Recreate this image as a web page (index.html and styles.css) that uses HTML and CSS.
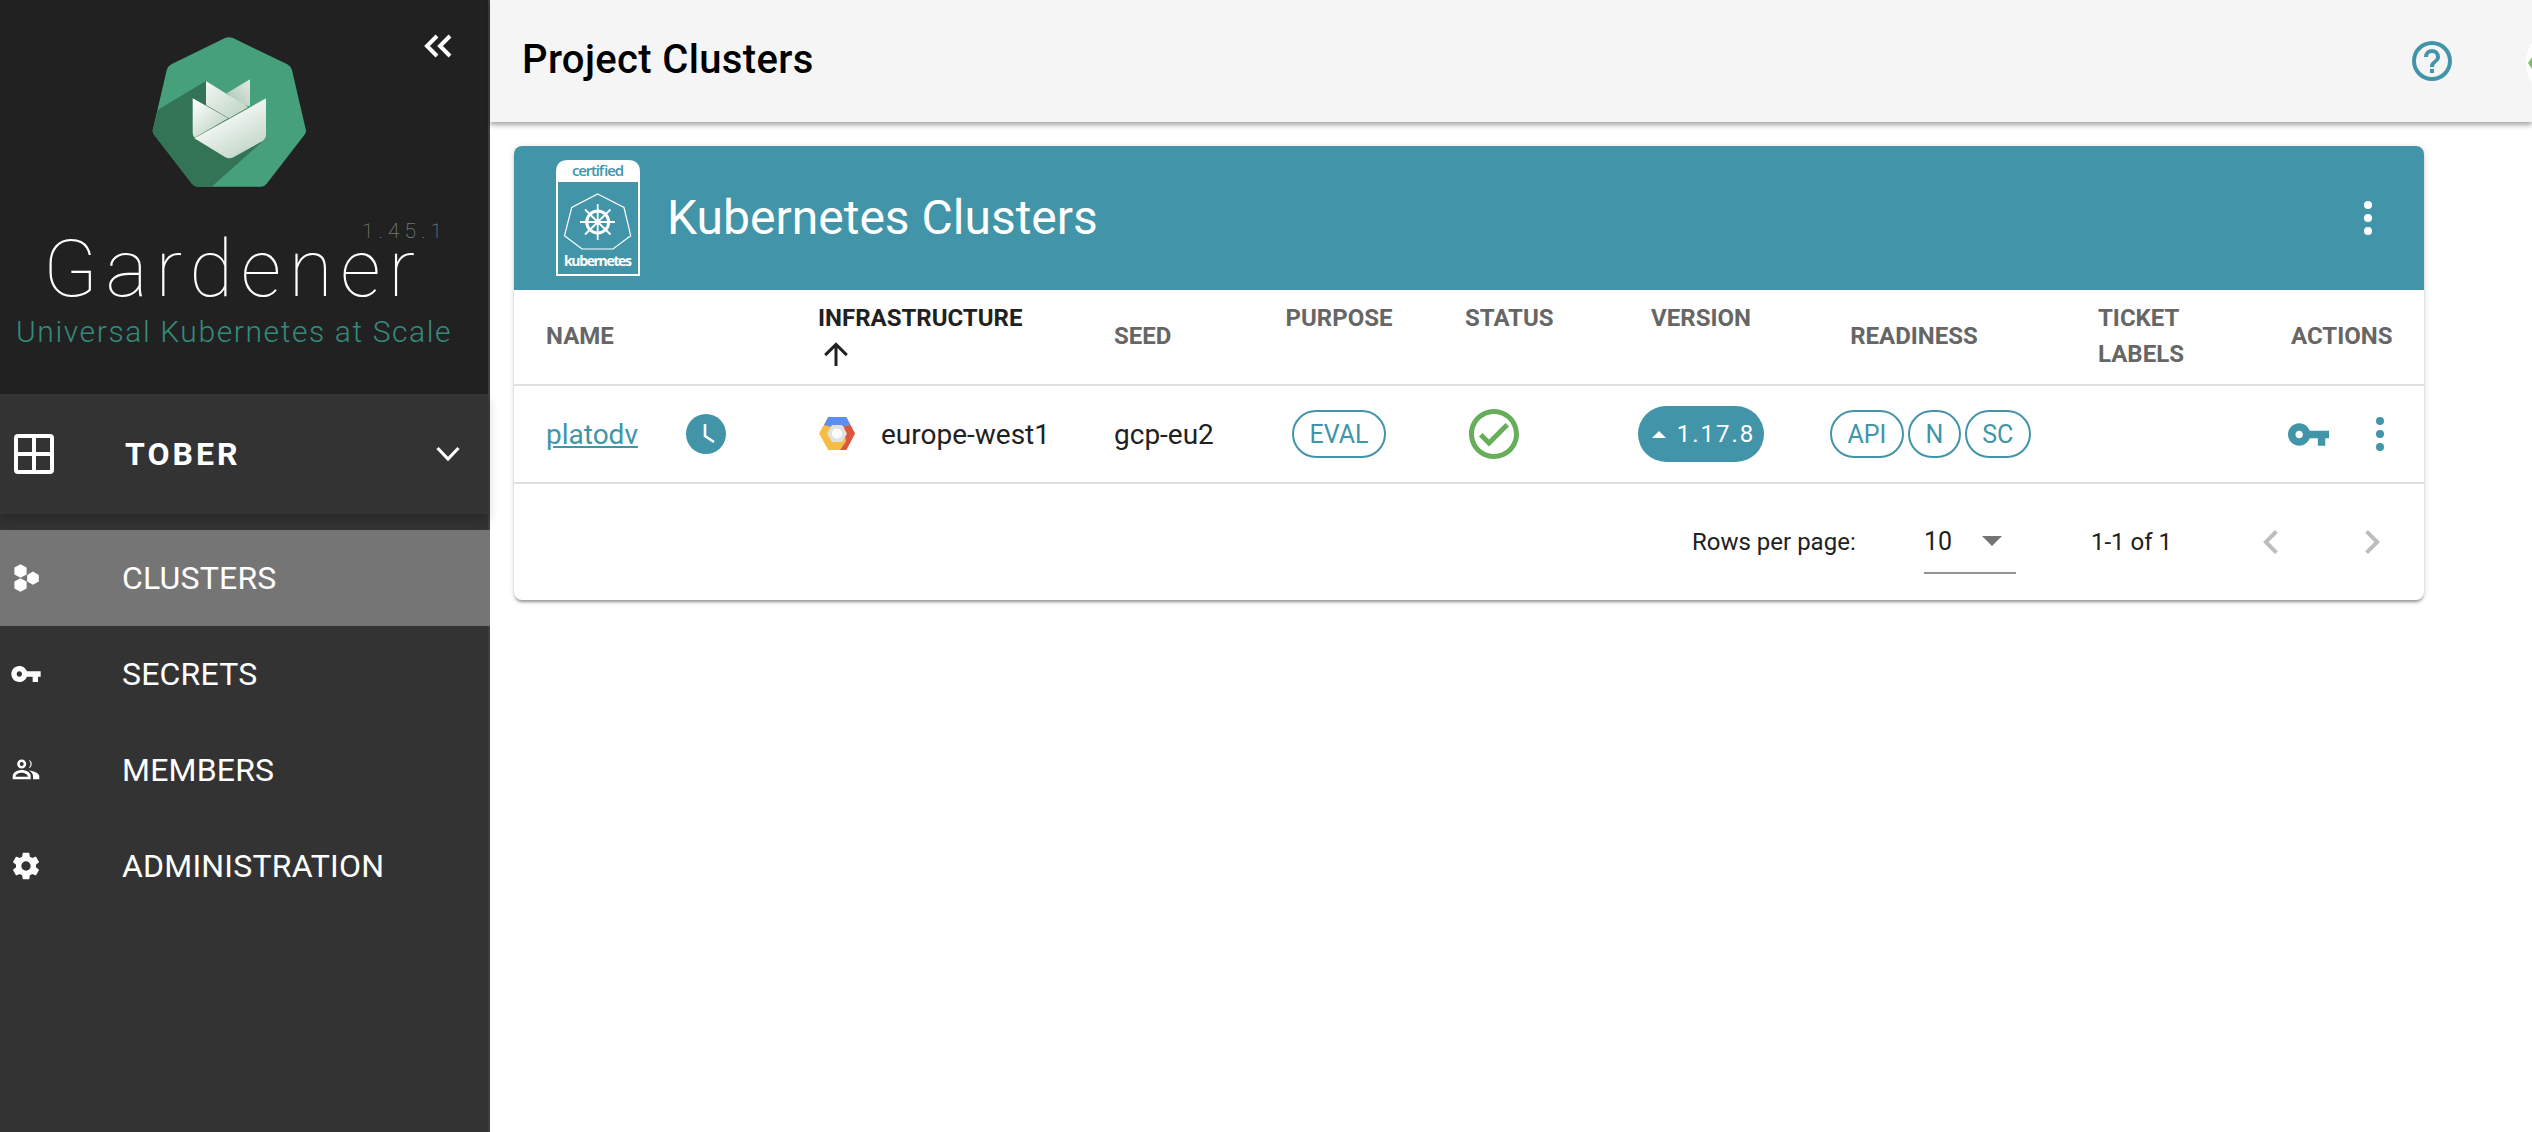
FILE: index.html
```html
<!DOCTYPE html>
<html lang="en">
<head>
<meta charset="utf-8">
<title>Project Clusters</title>
<link rel="stylesheet" href="styles.css">
</head>
<body>
<div class="app">
  <aside class="sidebar">
    <div class="brand">
      <svg class="collapse" viewBox="0 0 28 24"><path d="M13 2 3 12l10 10M26 2 16 12l10 10" fill="none" stroke="#fff" stroke-width="4"/></svg>
      <svg class="logo" viewBox="0 0 600 540">
        <defs>
          <linearGradient id="pf" x1="0.25" y1="0.2" x2="0.8" y2="1"><stop offset="0" stop-color="#fff"/><stop offset="1" stop-color="#bdd3c3"/></linearGradient>
          <linearGradient id="pl" x1="0.1" y1="0" x2="0.9" y2="1"><stop offset="0" stop-color="#fff"/><stop offset="1" stop-color="#b5cdbb"/></linearGradient>
          <linearGradient id="pc" x1="0" y1="0" x2="1" y2="1"><stop offset="0" stop-color="#f2f6f2"/><stop offset="1" stop-color="#bcd2c2"/></linearGradient>
          <linearGradient id="pr" x1="1" y1="0" x2="0" y2="1"><stop offset="0" stop-color="#e2ebe3"/><stop offset="1" stop-color="#a9c4b0"/></linearGradient>
        </defs>
        <path d="M285 54q12-5 24 0L472 133q11 6 14 18l41 176q3 10-4 18L410 491q-7 9-17 9H203q-10 0-17-9L73 345q-7-8-4-18l41-176q3-12 14-18Z" fill="#46a07c"/>
        <path d="M228 183 83 270l-14 57q-3 10 4 18L186 491q7 9 17 9h42L408 355 355 262Z" fill="#337356"/>
        <path d="M360 178v80l-30-2-40-36Z" fill="url(#pr)"/>
        <path d="M228 183 355 262l-58 33-69-40Z" fill="url(#pc)"/>
        <path d="M188 235 295 295l-101 58q-6-5-6-14Z" fill="url(#pl)"/>
        <path d="M193 355 408 235v108q0 14-10 20l-88 49q-12 6-24 0Z" fill="url(#pf)"/>
      </svg>
      <div class="wordmark">
        <span class="version">1.45.1</span>
        <div class="brand-name">Gardener</div>
      </div>
      <div class="tagline">Universal Kubernetes at Scale</div>
    </div>
    <div class="project">
      <svg class="project-grid" viewBox="0 0 40 40"><rect x="2" y="2" width="36" height="36" rx="2" fill="none" stroke="#fff" stroke-width="4"/><path d="M20 2v36M2 20h36" stroke="#fff" stroke-width="4"/></svg>
      <span class="project-name">TOBER</span>
      <svg class="project-caret" viewBox="0 0 24 16"><path d="M1.5 2 12 13 22.5 2" fill="none" stroke="#fff" stroke-width="3.2"/></svg>
    </div>
    <nav class="nav">
      <a class="nav-item active">
        <span class="nav-icon"><svg viewBox="0 0 32 32"><path fill="#fff" d="M10.5 2.2 16.6 5.6V12.4L10.5 15.8 4.4 12.4V5.6ZM10.5 16.2 16.6 19.6V26.4L10.5 29.8 4.4 26.4V19.6ZM23 9.6 28.8 13V19.4L23 22.8 17.2 19.4V13Z"/></svg></span>
        <span>CLUSTERS</span>
      </a>
      <a class="nav-item">
        <span class="nav-icon"><svg viewBox="0 0 24 24"><path fill="#fff" d="M12.65 10C11.83 7.67 9.61 6 7 6c-3.31 0-6 2.69-6 6s2.69 6 6 6c2.61 0 4.83-1.67 5.65-4H17v4h4v-4h2v-4H12.65zM7 14c-1.1 0-2-.9-2-2s.9-2 2-2 2 .9 2 2-.9 2-2 2z"/></svg></span>
        <span>SECRETS</span>
      </a>
      <a class="nav-item">
        <span class="nav-icon"><svg viewBox="0 0 32 32"><path fill="#fff" fill-rule="evenodd" d="M11.700 5.500a4.500 4.500 0 1 1 0 9 4.500 4.500 0 0 1 0-9ZM11.700 8a2 2 0 1 0 0 4 2 2 0 0 0 0-4ZM18.500 5.700a4.500 4.500 0 0 1 0 8.600c1.300-1.300 2-2.700 2-4.300s-.7-3-2-4.300ZM2.700 25.300V22C3 18 8 16 11.700 16c3.800 0 9 2 9 6v3.300ZM5.500 22.800H18C17.500 20 14 18.800 11.700 18.800 9 18.800 6 20 5.500 22.800ZM19 16.500C24 17 29.300 19 29.300 22.500V25.300H23V22C23 20 21.500 18 19 16.500Z"/></svg></span>
        <span>MEMBERS</span>
      </a>
      <a class="nav-item">
        <span class="nav-icon"><svg viewBox="0 0 24 24"><path fill="#fff" d="M12,15.5A3.5,3.5 0 0,1 8.5,12A3.5,3.5 0 0,1 12,8.5A3.5,3.5 0 0,1 15.5,12A3.5,3.5 0 0,1 12,15.5M19.43,12.97C19.47,12.65 19.5,12.33 19.5,12C19.5,11.67 19.47,11.34 19.43,11L21.54,9.37C21.73,9.22 21.78,8.95 21.66,8.73L19.66,5.27C19.54,5.05 19.27,4.96 19.05,5.05L16.56,6.05C16.04,5.66 15.5,5.32 14.87,5.07L14.5,2.42C14.46,2.18 14.25,2 14,2H10C9.75,2 9.54,2.18 9.5,2.42L9.13,5.07C8.5,5.32 7.96,5.66 7.44,6.05L4.95,5.05C4.73,4.96 4.46,5.05 4.34,5.27L2.34,8.73C2.21,8.95 2.27,9.22 2.46,9.37L4.57,11C4.53,11.34 4.5,11.67 4.5,12C4.5,12.33 4.53,12.65 4.57,12.97L2.46,14.63C2.27,14.78 2.21,15.05 2.34,15.27L4.34,18.73C4.46,18.95 4.73,19.03 4.95,18.95L7.44,17.94C7.96,18.34 8.5,18.68 9.13,18.93L9.5,21.58C9.54,21.82 9.75,22 10,22H14C14.25,22 14.46,21.82 14.5,21.58L14.87,18.93C15.5,18.67 16.04,18.34 16.56,17.94L19.05,18.95C19.27,19.03 19.54,18.95 19.66,18.73L21.66,15.27C21.78,15.05 21.73,14.78 21.54,14.63L19.43,12.97Z"/></svg></span>
        <span>ADMINISTRATION</span>
      </a>
    </nav>
  </aside>
  <main class="main">
    <header class="topbar">
      <h1 class="page-title">Project Clusters</h1>
      <svg class="help" viewBox="0 0 24 24"><path fill="#4295a8" d="M11,18H13V16H11V18M12,2A10,10 0 0,0 2,12A10,10 0 0,0 12,22A10,10 0 0,0 22,12A10,10 0 0,0 12,2M12,20C7.59,20 4,16.41 4,12C4,7.59 7.59,4 12,4C16.41,4 20,7.59 20,12C20,16.41 16.41,20 12,20M12,6A4,4 0 0,0 8,10H10A2,2 0 0,1 12,8A2,2 0 0,1 14,10C14,12 11,11.75 11,15H13C13,12.75 16,12.5 16,10A4,4 0 0,0 12,6Z"/></svg>
      <svg class="avatar" viewBox="0 0 64 64"><circle cx="36" cy="34" r="36" fill="#fff"/><path d="M2 34 8 25V43Z" fill="#7cc35f"/><path d="M6 17h8v2H6Z" fill="#a5d68c"/></svg>
    </header>
    <section class="card">
      <div class="card-head">
        <svg class="badge" viewBox="0 0 84 116">
          <path d="M1 12q0-11 11-11h60q11 0 11 11v103H1Z" fill="none" stroke="#fff" stroke-width="2"/>
          <path d="M1 22V12q0-11 11-11h60q11 0 11 11v10Z" fill="#fff"/>
          <text class="badge-top" x="42" y="16" text-anchor="middle" textLength="52">certified</text>
          <path d="M41.7 34 68 47.5l6.7 28.2L57 89H26L8.5 75.7 15.700 47.500Z" fill="none" stroke="#fff" stroke-width="1.2"/>
          <g fill="none" stroke="#fff">
            <circle cx="41.700" cy="62" r="11" stroke-width="3"/>
            <path d="M41.700 44V80M24 62H59M29 49.500 54.500 74.500M54.500 49.500 29 74.500" stroke-width="1.800"/>
          </g>
          <circle cx="41.700" cy="62" r="2.600" fill="#fff"/>
          <text class="badge-bottom" x="42" y="106" text-anchor="middle" textLength="68">kubernetes</text>
        </svg>
        <h2 class="card-title">Kubernetes Clusters</h2>
        <svg class="kebab" viewBox="0 0 12 36"><circle cx="6" cy="5" r="4" fill="#fff"/><circle cx="6" cy="18" r="4" fill="#fff"/><circle cx="6" cy="31" r="4" fill="#fff"/></svg>
      </div>
      <table class="clusters">
        <colgroup>
          <col class="c-name"><col class="c-infra"><col class="c-seed"><col class="c-purpose"><col class="c-status"><col class="c-version"><col class="c-ready"><col class="c-ticket"><col class="c-actions">
        </colgroup>
        <thead>
          <tr>
            <th>NAME</th>
            <th class="sorted">INFRASTRUCTURE<svg class="sort-arrow" viewBox="0 0 24 24"><path fill="#212121" d="M13,20H11V8L5.5,13.5L4.08,12.08L12,4.16L19.92,12.08L18.5,13.5L13,8V20Z"/></svg></th>
            <th>SEED</th>
            <th class="center wrapped">PURPOSE</th>
            <th class="wrapped status-head">STATUS</th>
            <th class="center wrapped">VERSION</th>
            <th class="center ready-head">READINESS</th>
            <th>TICKET<br>LABELS</th>
            <th class="right">ACTIONS</th>
          </tr>
        </thead>
        <tbody>
          <tr>
            <td><div class="name-cell"><a class="link">platodv</a><svg class="clock" viewBox="0 0 40 40"><circle cx="20" cy="20" r="20" fill="#4295a8"/><path d="M19 10v12l9 6" fill="none" stroke="#fff" stroke-width="2.600"/></svg></div></td>
            <td><div class="infra-cell">
              <svg class="gcp" viewBox="0 0 36 34">
                <path d="M9.300 0H27.300L36 16.500 27.300 33H9.300L0 16.500Z" fill="#f6bd45"/>
                <path d="M5 8 9.300 0H27.300L31.500 8 25 9.500H11Z" fill="#5c8df0"/>
                <path d="M31.500 8 36 16.500 27.300 33H21L27 24.500 25 9.500Z" fill="#dc5743"/>
                <path d="M8 16.500 13 8H23L28 16.500 23 25H13Z" fill="#e1e1e1"/>
                <circle cx="18" cy="16.500" r="5" fill="#fff"/>
              </svg>
              <span>europe-west1</span>
            </div></td>
            <td>gcp-eu2</td>
            <td class="center"><span class="chip">EVAL</span></td>
            <td class="status-cell"><svg class="check" viewBox="0 0 24 24"><path fill="#66ae5a" d="M12 2C6.500 2 2 6.500 2 12S6.500 22 12 22 22 17.500 22 12 17.500 2 12 2M12 20C7.590 20 4 16.410 4 12S7.590 4 12 4 20 7.590 20 12 16.410 20 12 20M16.590 7.580L10 14.170L7.410 11.590L6 13L10 17L18 9L16.590 7.580Z"/></svg></td>
            <td class="center"><span class="version-chip"><i class="caret-up"></i>1.17.8</span></td>
            <td><div class="chips"><span class="chip">API</span><span class="chip">N</span><span class="chip">SC</span></div></td>
            <td></td>
            <td><div class="actions">
              <svg class="act-key" viewBox="0 0 22 12"><path fill="#4295a8" d="M11.650 4C10.830 1.670 8.610 0 6 0 2.690 0 0 2.690 0 6s2.690 6 6 6c2.610 0 4.830-1.670 5.650-4H16v4h4V8h2V4H11.650zM6 8C4.900 8 4 7.100 4 6s.9-2 2-2 2 .9 2 2-.9 2-2 2z"/></svg>
              <svg class="act-kebab" viewBox="0 0 12 36"><circle cx="6" cy="5" r="4" fill="#4295a8"/><circle cx="6" cy="18" r="4" fill="#4295a8"/><circle cx="6" cy="31" r="4" fill="#4295a8"/></svg>
            </div></td>
          </tr>
        </tbody>
      </table>
      <div class="pager">
        <span class="pager-label">Rows per page:</span>
        <div class="pager-select"><span>10</span><i class="caret-down"></i></div>
        <span class="pager-range">1-1 of 1</span>
        <svg class="pager-prev" viewBox="0 0 24 24"><path fill="#bdbdbd" d="M15.410,16.580L10.830,12L15.410,7.410L14,6L8,12L14,18L15.410,16.580Z"/></svg>
        <svg class="pager-next" viewBox="0 0 24 24"><path fill="#bdbdbd" d="M8.590,16.580L13.170,12L8.590,7.410L10,6L16,12L10,18L8.590,16.580Z"/></svg>
      </div>
    </section>
  </main>
</div>
</body>
</html>
```

FILE: styles.css
```css
* { box-sizing: border-box; }
html, body { margin: 0; height: 100%; overflow: hidden; }
body { font-family: Roboto, "Liberation Sans", sans-serif; background: #fff; color: #212121; }
svg { display: block; flex-shrink: 0; }

.app { display: flex; height: 1132px; }

.sidebar { width: 490px; flex-shrink: 0; background: #333; border-right: 2px solid #3f3f3f; color: #fff; display: flex; flex-direction: column; }
.brand { height: 394px; background: #212121; position: relative; padding-top: 20px; display: flex; flex-direction: column; }
.collapse { position: absolute; left: 424px; top: 34px; width: 28px; height: 24px; }
.logo { width: 200px; height: 180px; margin-left: 130px; }
.wordmark { position: relative; margin-top: 41px; height: 68px; }
.brand-name { font-size: 80px; line-height: 56px; font-weight: 100; letter-spacing: 7.700px; padding-left: 43px; white-space: nowrap; }
.version { position: absolute; left: 362px; top: -17px; font-size: 21px; line-height: 14px; font-weight: 100; letter-spacing: 5px; color: #9a9a9a; }
.tagline { margin-top: 3px; padding-left: 16px; font-size: 30px; line-height: 40px; font-weight: 300; letter-spacing: 1.600px; color: #358a7c; white-space: nowrap; }

.project { height: 120px; background: #333; display: flex; align-items: center; padding-left: 14px; box-shadow: 0 6px 10px rgba(0,0,0,.22); position: relative; }
.project-grid { width: 40px; height: 40px; }
.project-name { margin-left: 71px; font-size: 32px; font-weight: 700; letter-spacing: 3px; }
.project-caret { width: 24px; height: 16px; margin-left: auto; margin-right: 28px; }

.nav { margin-top: 16px; display: flex; flex-direction: column; }
.nav-item { height: 96px; display: flex; align-items: center; font-size: 32px; letter-spacing: .2px; color: #fff; }
.nav-item.active { background: #757575; margin-right: -2px; }
.nav-icon { width: 122px; padding-left: 10px; flex-shrink: 0; }
.nav-icon svg { width: 32px; height: 32px; }

.main { flex: 1; min-width: 0; }
.topbar { height: 122px; background: #f5f5f5; display: flex; align-items: center; padding-left: 32px; box-shadow: 0 3px 5px rgba(0,0,0,.35); position: relative; }
.page-title { margin: 0 0 4px; font-size: 40px; font-weight: 500; letter-spacing: .35px; color: #000; }
.help { width: 48px; height: 48px; margin-left: auto; }
.avatar { width: 64px; height: 64px; margin-left: 70px; margin-right: -58px; }

.card { width: 1910px; margin: 24px 0 0 24px; background: #fff; border-radius: 8px; box-shadow: 0 3px 3px -1px rgba(0,0,0,.35), 0 1px 6px rgba(0,0,0,.14); overflow: hidden; }
.card-head { height: 144px; background: #4295a8; display: flex; align-items: center; padding-left: 42px; color: #fff; }
.badge { width: 84px; height: 116px; }
.badge-top { font: 600 15px "Open Sans", sans-serif; fill: #4295a8; }
.badge-bottom { font: 700 14px "Open Sans", sans-serif; fill: #fff; }
.card-title { margin: 0 0 2px 27px; font-size: 48px; font-weight: 400; }
.kebab { width: 12px; height: 36px; margin-left: auto; margin-right: 50px; }

.clusters { width: 100%; table-layout: fixed; border-collapse: separate; border-spacing: 0; }
.c-name { width: 272px; } .c-infra { width: 296px; } .c-seed { width: 172px; } .c-purpose { width: 170px; }
.c-status { width: 180px; } .c-version { width: 194px; } .c-ready { width: 268px; } .c-ticket { width: 193px; } .c-actions { width: 165px; }
.clusters th { height: 96px; padding: 0 32px 2px; text-align: left; font-size: 24px; line-height: 36px; font-weight: 700; color: #666; border-bottom: 2px solid #e0e0e0; white-space: nowrap; }
.clusters td { height: 98px; padding: 0 32px; font-size: 28px; border-bottom: 2px solid #e0e0e0; white-space: nowrap; }
.clusters .center { text-align: center; padding-left: 0; padding-right: 0; }
.clusters .right { text-align: right; padding-right: 33px; }
.clusters .sorted { color: #212121; }
.clusters .wrapped { padding-bottom: 38px; }
.clusters .status-head { padding-left: 41px; padding-right: 0; }
.clusters .ready-head { padding-right: 36px; padding-left: 0; }
.clusters .status-cell { padding-left: 45px; padding-right: 0; }
.sort-arrow { width: 36px; height: 36px; }

.name-cell, .infra-cell { display: flex; align-items: center; }
.link { color: #4295a8; text-decoration: underline; }
.clock { width: 40px; height: 40px; margin-left: 48px; }
.gcp { width: 36px; height: 34px; margin-left: 1px; margin-right: 26px; }

.chip { display: inline-flex; align-items: center; height: 48px; padding: 0 15.500px; border: 2px solid #4295a8; border-radius: 24px; font-size: 25px; color: #4295a8; }
.chips { display: flex; gap: 4px; }
.check { width: 60px; height: 60px; margin-left: -5px; }
.version-chip { display: inline-flex; align-items: center; height: 56px; padding: 0 9px 0 14px; border-radius: 28px; background: #4295a8; color: #fff; font-size: 24px; letter-spacing: 2px; vertical-align: middle; }
.caret-up { width: 0; height: 0; border-left: 7px solid transparent; border-right: 7px solid transparent; border-bottom: 7px solid #fff; margin-right: 11px; }
.actions { display: flex; align-items: center; justify-content: flex-end; }
.act-key { width: 41px; height: 23px; }
.act-kebab { width: 12px; height: 36px; margin-left: 45px; margin-right: 6px; }

.pager { height: 116px; display: flex; align-items: center; font-size: 24px; color: #212121; }
.pager-label { margin-left: 1178px; width: 162px; white-space: nowrap; }
.pager-select { margin-left: 70px; width: 92px; height: 64px; border-bottom: 2px solid #949494; display: flex; align-items: center; justify-content: space-between; padding-right: 14px; font-size: 25px; }
.caret-down { width: 0; height: 0; border-left: 10px solid transparent; border-right: 10px solid transparent; border-top: 10px solid #757575; }
.pager-range { margin-left: 75px; width: 79px; white-space: nowrap; font-size: 24px; }
.pager-prev, .pager-next { width: 48px; height: 48px; }
.pager-prev { margin-left: 77px; }
.pager-next { margin-left: 53px; }
```
